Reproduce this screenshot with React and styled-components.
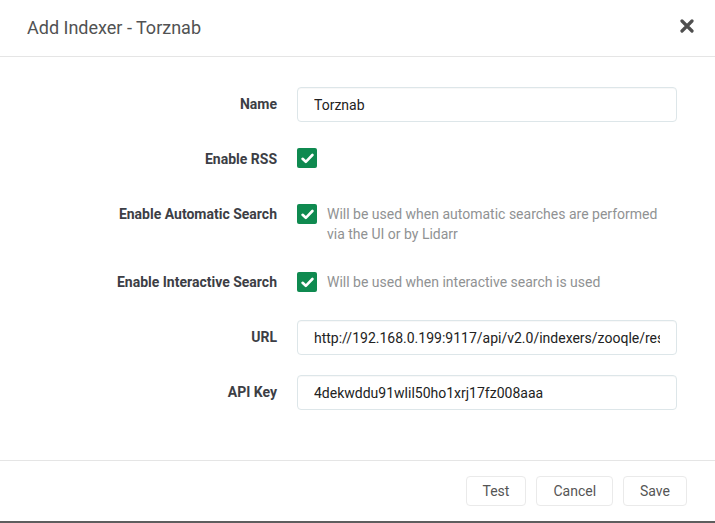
import React from "react";
import styled, { createGlobalStyle } from "styled-components";

const Global = createGlobalStyle`
  html, body { margin: 0; padding: 0; background: #fff; }
  body { font-family: Roboto, "Open Sans", "Liberation Sans", sans-serif; color: #515253; }
  * { box-sizing: border-box; }
`;

const Modal = styled.div`
  width: 715px;
  height: 523px;
  display: flex;
  flex-direction: column;
  background: #fff;
  border-bottom: 2px solid #5e5e5e;
`;

const Header = styled.div`
  height: 57px;
  flex: none;
  display: flex;
  align-items: center;
  justify-content: space-between;
  padding: 0 21px 0 27px;
  border-bottom: 1px solid #e5e5e5;
`;

const Title = styled.h1`
  margin: 0;
  font-size: 18px;
  font-weight: 400;
  color: #515253;
  padding-bottom: 2px;
`;

const Close = styled.button`
  border: 0;
  background: none;
  padding: 0;
  width: 14px;
  height: 14px;
  display: flex;
  cursor: pointer;
  margin-bottom: 4px;
`;

const Body = styled.div`
  flex: 1;
  padding: 30px 30px 0 30px;
`;

const Group = styled.div`
  display: grid;
  grid-template-columns: 247px 380px;
  column-gap: 20px;
  margin-bottom: 20px;
  min-height: 35px;
`;

const Label = styled.label`
  text-align: right;
  font-weight: 700;
  font-size: 14px;
  line-height: 35px;
  color: #3c3e45;
`;

const Input = styled.input`
  height: 35px;
  width: 380px;
  padding: 6px 16px;
  border: 1px solid #dde6e9;
  border-radius: 4px;
  font-family: inherit;
  font-size: 14px;
  color: #222;
  background: #fff;
  outline: none;
  box-shadow: inset 0 1px 1px rgba(0,0,0,0.03);
`;

const CheckRow = styled.div`
  display: flex;
  align-items: flex-start;
  gap: 10px;
  padding-top: ${p => (p.$tight ? 7 : 6)}px;
  padding-bottom: ${p => (p.$tight ? 1 : 0)}px;
`;

const Box = styled.span`
  flex: none;
  width: 20px;
  height: 20px;
  border-radius: 2px;
  background: #0f8a50;
  display: flex;
  align-items: center;
  justify-content: center;
`;

const Help = styled.span`
  font-size: 14px;
  line-height: 20px;
  color: #909293;
  width: 340px;
`;

const Footer = styled.div`
  height: 61px;
  flex: none;
  border-top: 1px solid #e5e5e5;
  display: flex;
  justify-content: flex-end;
  align-items: flex-start;
  gap: 10px;
  padding: 15px 28px 0 0;
`;

const Button = styled.button`
  height: 30px;
  padding: 0 16px;
  border: 1px solid #eaeaea;
  border-radius: 4px;
  background: #fff;
  font-family: inherit;
  font-size: 14px;
  color: #555;
  cursor: pointer;
`;

const Check = () => (
  <Box>
    <svg width="13" height="11" viewBox="0 0 13 11">
      <path d="M1.6 5.8 L4.8 8.8 L11.4 2" fill="none" stroke="#fff" strokeWidth="2.6" strokeLinecap="round" strokeLinejoin="round" />
    </svg>
  </Box>
);

const CheckField = ({ label, help }) => (
  <Group>
    <Label>{label}</Label>
    <CheckRow $tight={!!help}>
      <Check />
      {help && <Help>{help}</Help>}
    </CheckRow>
  </Group>
);

const TextField = ({ label, value }) => (
  <Group>
    <Label>{label}</Label>
    <Input defaultValue={value} readOnly />
  </Group>
);

export default function App() {
  return (
    <>
      <Global />
      <Modal>
        <Header>
          <Title>Add Indexer - Torznab</Title>
          <Close aria-label="Close">
            <svg width="14" height="14" viewBox="0 0 14 14">
              <path d="M2 2 L12 12 M12 2 L2 12" stroke="#4f4f4f" strokeWidth="3.2" strokeLinecap="round" />
            </svg>
          </Close>
        </Header>
        <Body>
          <TextField label="Name" value="Torznab" />
          <CheckField label="Enable RSS" />
          <CheckField
            label="Enable Automatic Search"
            help="Will be used when automatic searches are performed via the UI or by Lidarr"
          />
          <CheckField
            label="Enable Interactive Search"
            help="Will be used when interactive search is used"
          />
          <TextField label="URL" value="http://192.168.0.199:9117/api/v2.0/indexers/zooqle/results/torznab/" />
          <TextField label="API Key" value="4dekwddu91wlil50ho1xrj17fz008aaa" />
        </Body>
        <Footer>
          <Button>Test</Button>
          <Button>Cancel</Button>
          <Button>Save</Button>
        </Footer>
      </Modal>
    </>
  );
}
